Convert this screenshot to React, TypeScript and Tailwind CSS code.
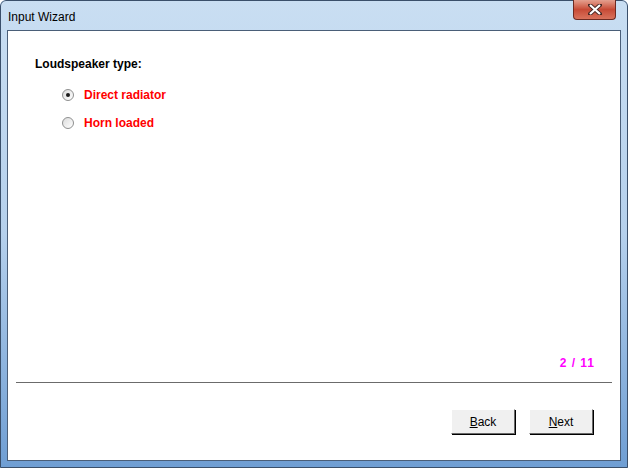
import React, { useState } from "react";

const font = { fontFamily: '"Liberation Sans", Arial, sans-serif' };

function Radio({ checked, label, onClick }: { checked: boolean; label: string; onClick: () => void }) {
  return (
    <div className="flex items-center h-[14px] cursor-pointer" onClick={onClick}>
      <span className="relative w-[12px] h-[12px] rounded-full border border-[#8e8f8f] bg-gradient-to-br from-[#dcdcdc] to-[#ffffff] flex items-center justify-center">
        {checked && <span className="w-[4px] h-[4px] rounded-full bg-[#1a1a1a]" />}
      </span>
      <span className="ml-[10px] text-[12px] font-bold text-[#ff0000] leading-none">{label}</span>
    </div>
  );
}

function Btn({ label }: { label: string }) {
  return (
    <button className="w-[64px] h-[25px] bg-[#f0f0f0] border border-t-white border-l-white border-r-[#696969] border-b-[#696969] shadow-[1px_1px_0_#000] text-[12px] text-black leading-none">
      <span className="underline">{label[0]}</span>
      {label.slice(1)}
    </button>
  );
}

export default function App() {
  const [type, setType] = useState("direct");
  return (
    <div className="w-[628px] h-[468px] bg-[#a9c6e4] relative overflow-hidden rounded-t-[6px]" style={font}>
      <div className="absolute inset-0 bg-gradient-to-b from-[#c9def2] via-[#b5d0ec] to-[#6f9ed3] rounded-t-[6px] border border-[#3a4f6a]" />
      <div className="relative flex flex-col h-full px-[7px] pb-[7px]">
        <div className="h-[30px] flex items-start justify-between">
          <span className="mt-[8px] ml-[1px] text-[12px] text-black">Input Wizard</span>
          <div className="w-[43px] h-[20px] mr-[5px] rounded-b-[4px] border border-t-0 border-[#6d2a22] bg-gradient-to-b from-[#e4a08f] via-[#c74a36] to-[#d9725c] flex items-center justify-center">
            <svg width="14" height="11" viewBox="0 0 14 11">
              <path d="M2 1 L12 10 M12 1 L2 10" stroke="#4a2a26" strokeWidth="4" strokeLinecap="square" />
              <path d="M2 1 L12 10 M12 1 L2 10" stroke="#ffffff" strokeWidth="2.2" />
            </svg>
          </div>
        </div>
        <div className="flex-1 bg-white border border-[#4a5e78] flex flex-col">
          <div className="pt-[24px] pl-[27px]">
            <div className="text-[12px] font-bold text-black">Loudspeaker type:</div>
            <div className="mt-[15px] ml-[27px] flex flex-col gap-[14px]">
              <Radio checked={type === "direct"} label="Direct radiator" onClick={() => setType("direct")} />
              <Radio checked={type === "horn"} label="Horn loaded" onClick={() => setType("horn")} />
            </div>
          </div>
          <div className="flex-1" />
          <div className="text-right pr-[25px] text-[12px] font-bold text-[#ff00ff] tracking-[1px]">2 / 11</div>
          <div className="mx-[8px] mt-[10px] border-t border-[#6b6b6b]" />
          <div className="flex justify-end gap-[14px] pr-[27px] pt-[26px] pb-[26px]">
            <Btn label="Back" />
            <Btn label="Next" />
          </div>
        </div>
      </div>
    </div>
  );
}
